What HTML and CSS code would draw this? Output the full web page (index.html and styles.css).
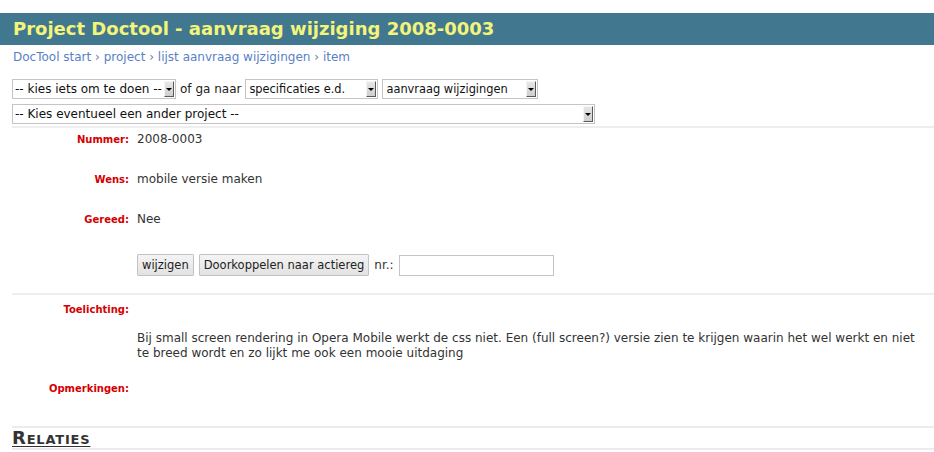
FILE: index.html
```html
<!DOCTYPE html>
<html lang="nl">
<head>
<meta charset="utf-8">
<title>Project Doctool - aanvraag wijziging 2008-0003</title>
<link rel="stylesheet" href="styles.css">
</head>
<body>
<header class="top">
  <h1 class="title">Project Doctool - aanvraag wijziging 2008-0003</h1>
</header>
<nav class="crumbs">
  <a href="#">DocTool start</a> <span class="sep">›</span> <a href="#">project</a> <span class="sep">›</span> <a href="#">lijst aanvraag wijzigingen</a> <span class="sep">›</span> <a href="#">item</a>
</nav>
<form class="tools">
  <div class="tool-row">
    <span class="select w-doen"><select><option>-- kies iets om te doen --</option></select><span class="arrow"></span></span>
    <span class="tool-text">of ga naar</span>
    <span class="select w-spec small"><select><option>specificaties e.d.</option></select><span class="arrow"></span></span>
    <span class="select w-aanv small"><select><option>aanvraag wijzigingen</option></select><span class="arrow"></span></span>
  </div>
  <div class="tool-row second">
    <span class="select w-proj"><select><option>-- Kies eventueel een ander project --</option></select><span class="arrow"></span></span>
  </div>
</form>
<section class="record">
  <div class="field"><span class="lbl">Nummer:</span><span class="val">2008-0003</span></div>
  <div class="field"><span class="lbl">Wens:</span><span class="val">mobile versie maken</span></div>
  <div class="field"><span class="lbl">Gereed:</span><span class="val">Nee</span></div>
  <div class="field actions">
    <span class="lbl"></span>
    <div class="val buttons">
      <button type="button" class="btn">wijzigen</button>
      <button type="button" class="btn">Doorkoppelen naar actiereg</button>
      <span class="nr">nr.:</span>
      <input type="text" class="nr-input">
    </div>
  </div>
</section>
<section class="record notes">
  <div class="note-label"><span class="lbl">Toelichting:</span></div>
  <div class="note-body"><span class="lbl"></span><p class="val para">Bij small screen rendering in Opera Mobile werkt de css niet. Een (full screen?) versie zien te krijgen waarin het wel werkt en niet te breed wordt en zo lijkt me ook een mooie uitdaging</p></div>
  <div class="note-label last"><span class="lbl">Opmerkingen:</span></div>
</section>
<h2 class="relaties">Relaties</h2>
</body>
</html>
```
FILE: styles.css
```css
body {
  margin: 0;
  font-family: "DejaVu Sans", Verdana, sans-serif;
  font-size: 12px;
  color: #333;
  background: #fff;
}

.top {
  margin-top: 13px;
  height: 32px;
  background: #41788f;
  display: flex;
  align-items: center;
  padding-left: 13px;
}

.title {
  margin: 0;
  font-size: 18px;
  font-weight: bold;
  color: #f4f47a;
  line-height: 22px;
}

.crumbs {
  padding: 5px 13px 0;
  line-height: 15px;
  color: #6a8ac6;
}

.crumbs a {
  color: #5a7fc6;
  text-decoration: none;
}

.crumbs .sep {
  color: #6a7fa6;
}

.tools {
  margin: 14px 0 0 12px;
}

.tool-row {
  display: flex;
  align-items: center;
  gap: 4px;
  height: 20px;
}

.tool-row.second {
  margin-top: 5px;
}

.tool-text {
  color: #222;
}

.select {
  display: inline-flex;
  box-sizing: border-box;
  height: 20px;
  border: 1px solid #c4c4c4;
  padding: 1px 1px 1px 0;
  background: #fff;
}

.select select {
  flex: 1;
  min-width: 0;
  appearance: none;
  -webkit-appearance: none;
  border: 0;
  background: transparent;
  font-family: "DejaVu Sans", Verdana, sans-serif;
  font-size: 12px;
  color: #111;
  padding: 0 0 0 2px;
  margin: 0;
  height: 16px;
  line-height: 16px;
  outline: none;
}

.select.small select {
  font-size: 11.4px;
  padding-left: 3px;
}

.arrow {
  width: 10px;
  box-sizing: border-box;
  background: linear-gradient(#e6e6e6, #cfcfcf);
  border: 1px solid;
  border-color: #f4f4f4 #5a5a5a #5a5a5a #f4f4f4;
  display: flex;
  align-items: center;
  justify-content: center;
}

.arrow::before {
  content: "";
  border-left: 3px solid transparent;
  border-right: 3px solid transparent;
  border-top: 3px solid #000;
  margin-top: 1px;
}

.w-doen { width: 164px; }
.w-spec { width: 133px; }
.w-aanv { width: 156px; }
.w-proj { width: 583px; }

.record {
  margin: 2px 0 0 12px;
  border-top: 2px solid #eeeeee;
  padding: 4px 14px 17px 0;
}

.field {
  display: flex;
  align-items: baseline;
  min-height: 40px;
  line-height: 15px;
}

.lbl {
  flex: none;
  width: 117px;
  padding-right: 8px;
  box-sizing: content-box;
  text-align: right;
  font-size: 10px;
  font-weight: bold;
  color: #d40000;
  line-height: 15px;
}

.val {
  color: #333;
}

.field.actions {
  min-height: 0;
  padding-top: 2px;
  align-items: center;
}

.buttons {
  display: flex;
  align-items: center;
  gap: 5px;
}

.btn {
  height: 22px;
  box-sizing: border-box;
  border: 1px solid #c2c2c2;
  border-radius: 1px;
  background: linear-gradient(#f4f4f4, #e2e2e2);
  font-family: "DejaVu Sans", Verdana, sans-serif;
  font-size: 11.5px;
  color: #222;
  padding: 0 4px;
  margin: 0;
}

.nr {
  color: #333;
}

.nr-input {
  width: 155px;
  height: 21px;
  box-sizing: border-box;
  border: 1px solid #c4c4c4;
  margin: 0;
  padding: 0 3px;
  font-family: "DejaVu Sans", Verdana, sans-serif;
  font-size: 12px;
}

.notes {
  margin-top: 0;
  padding: 7px 14px 30px 0;
}

.note-label {
  display: flex;
  line-height: 15px;
}

.note-body {
  display: flex;
  margin-top: 14px;
}

.para {
  margin: 0;
  line-height: 15px;
  font-size: 12px;
}

.note-label.last {
  margin-top: 20px;
}

.relaties {
  margin: 0 0 0 12px;
  border-top: 2px solid #ececec;
  border-bottom: 2px solid #ececec;
  font-size: 18px;
  line-height: 20px;
  font-weight: bold;
  font-variant: small-caps;
  letter-spacing: 0.8px;
  color: #333;
  text-decoration: underline;
  text-underline-offset: 2px;
}
```
